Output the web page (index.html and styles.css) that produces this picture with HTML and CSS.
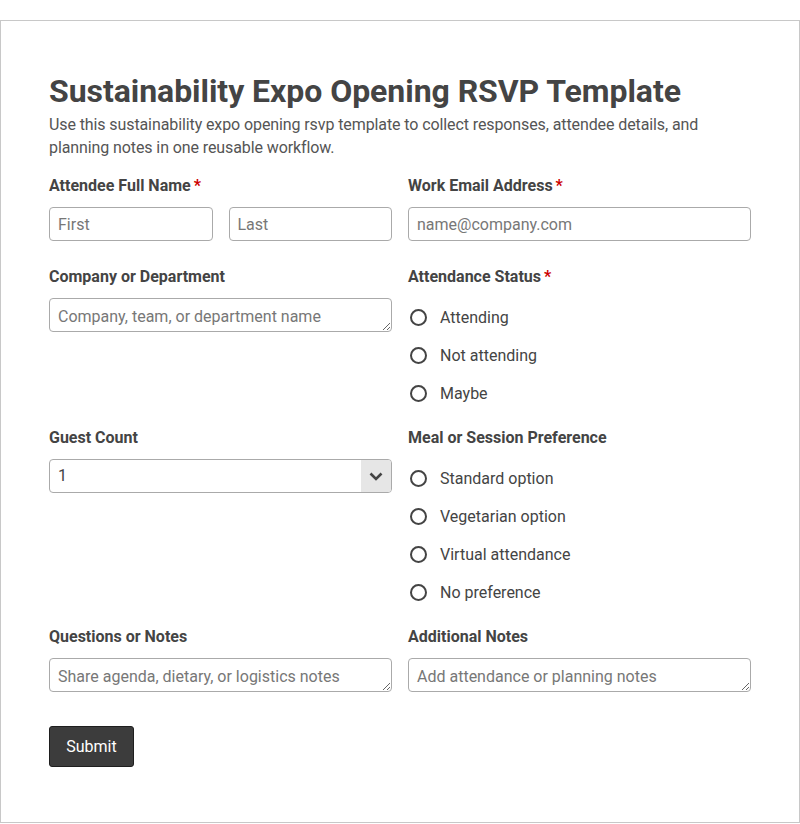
FILE: index.html
```html
<!DOCTYPE html>
<html lang="en">
<head>
    <meta charset="UTF-8">
    <meta name="viewport" content="width=device-width, initial-scale=1.0">
    <title>Sustainability Expo Opening RSVP Template</title>
    <link rel="stylesheet" href="styles.css">
</head>
<body>

    <div class="container">
        <h1>Sustainability Expo Opening RSVP Template</h1>
        <p class="intro">Use this sustainability expo opening rsvp template to collect responses, attendee details, and planning notes in one reusable workflow.</p>

        <form id="rsvpForm" class="form-grid">
            <div class="form-group">
                <label>Attendee Full Name<span class="req">*</span></label>
                <div class="name-row">
                    <input type="text" name="first" placeholder="First">
                    <input type="text" name="last" placeholder="Last">
                </div>
            </div>

            <div class="form-group">
                <label for="email">Work Email Address<span class="req">*</span></label>
                <input type="email" id="email" name="email" placeholder="name@company.com">
            </div>

            <div class="form-group">
                <label for="company">Company or Department</label>
                <textarea id="company" name="company" rows="1" placeholder="Company, team, or department name"></textarea>
            </div>

            <div class="form-group">
                <label>Attendance Status<span class="req">*</span></label>
                <div class="radio-list">
                    <label class="radio"><input type="radio" name="status" value="attending"><span>Attending</span></label>
                    <label class="radio"><input type="radio" name="status" value="not"><span>Not attending</span></label>
                    <label class="radio"><input type="radio" name="status" value="maybe"><span>Maybe</span></label>
                </div>
            </div>

            <div class="form-group">
                <label for="guests">Guest Count</label>
                <div class="select-wrap">
                    <select id="guests" name="guests">
                        <option>1</option>
                        <option>2</option>
                        <option>3</option>
                        <option>4</option>
                    </select>
                    <span class="select-arrow">
                        <svg width="14" height="9" viewBox="0 0 14 9"><path d="M1.5 1.5 L7 7 L12.5 1.5" fill="none" stroke="#444" stroke-width="2.6"/></svg>
                    </span>
                </div>
            </div>

            <div class="form-group">
                <label>Meal or Session Preference</label>
                <div class="radio-list">
                    <label class="radio"><input type="radio" name="meal" value="standard"><span>Standard option</span></label>
                    <label class="radio"><input type="radio" name="meal" value="veg"><span>Vegetarian option</span></label>
                    <label class="radio"><input type="radio" name="meal" value="virtual"><span>Virtual attendance</span></label>
                    <label class="radio"><input type="radio" name="meal" value="none"><span>No preference</span></label>
                </div>
            </div>

            <div class="form-group">
                <label for="questions">Questions or Notes</label>
                <textarea id="questions" name="questions" rows="1" placeholder="Share agenda, dietary, or logistics notes"></textarea>
            </div>

            <div class="form-group">
                <label for="notes">Additional Notes</label>
                <textarea id="notes" name="notes" rows="1" placeholder="Add attendance or planning notes"></textarea>
            </div>
        </form>

        <button type="submit" form="rsvpForm" class="btn">Submit</button>
    </div>

</body>
</html>
```

FILE: styles.css
```css
body {
    font-family: Roboto, "Noto Sans", Arial, sans-serif;
    background-color: #ffffff;
    color: #444;
    margin: 20px 0 0 0;
    padding: 0;
}
.container {
    border: 1px solid #c8c8c8;
    padding: 51px 48px 55px 48px;
}
h1 {
    font-size: 32px;
    font-weight: 700;
    line-height: 38px;
    letter-spacing: -0.05px;
    color: #444;
    margin: 0 0 3px 0;
}
.intro {
    font-size: 16px;
    line-height: 23px;
    letter-spacing: -0.1px;
    color: #555;
    margin: 0 0 17px 0;
}
.form-grid {
    display: grid;
    grid-template-columns: 1fr 1fr;
    column-gap: 16px;
    row-gap: 26px;
}
.form-group > label {
    display: block;
    font-size: 16px;
    font-weight: 700;
    line-height: 20px;
    margin-bottom: 11px;
    color: #444;
}
.req {
    color: #c00;
    margin-left: 3px;
}
.name-row {
    display: grid;
    grid-template-columns: 1fr 1fr;
    gap: 16px;
}
.form-group input[type="text"],
.form-group input[type="email"],
.form-group textarea,
.form-group select {
    display: block;
    width: 100%;
    height: 34px;
    padding: 6px 8px;
    font-family: inherit;
    font-size: 16px;
    line-height: 20px;
    color: #444;
    border: 1px solid #aaa;
    border-radius: 4px;
    box-sizing: border-box;
    background: #fff;
    margin: 0;
}
.form-group textarea {
    padding: 8px 8px 4px 8px;
    resize: vertical;
    overflow: hidden;
}
::placeholder {
    color: #777;
    opacity: 1;
}
.select-wrap {
    position: relative;
}
.form-group select {
    appearance: none;
    -webkit-appearance: none;
    padding-right: 40px;
}
.select-arrow {
    position: absolute;
    top: 1px;
    right: 1px;
    bottom: 1px;
    width: 30px;
    background: #e6e6e6;
    border-radius: 0 3px 3px 0;
    display: flex;
    align-items: center;
    justify-content: center;
    pointer-events: none;
}
.radio-list {
    display: flex;
    flex-direction: column;
    gap: 16px;
    padding: 8px 0 0 0;
    margin-bottom: -2px;
}
.radio {
    display: flex;
    align-items: center;
    height: 22px;
    font-size: 16px;
    color: #444;
}
.radio input {
    appearance: none;
    -webkit-appearance: none;
    width: 17px;
    height: 17px;
    margin: 0 13px 0 2px;
    border: 2px solid #444;
    border-radius: 50%;
    box-sizing: border-box;
    background: #fff;
}
.btn {
    display: block;
    margin-top: 34px;
    padding: 10px 16px;
    width: 85px;
    height: 41px;
    background-color: #3c3c3c;
    color: #fff;
    font-family: inherit;
    font-size: 16px;
    border: 1px solid #1e1e1e;
    border-radius: 3px;
    cursor: pointer;
}
.btn:hover {
    background-color: #222;
}
```
